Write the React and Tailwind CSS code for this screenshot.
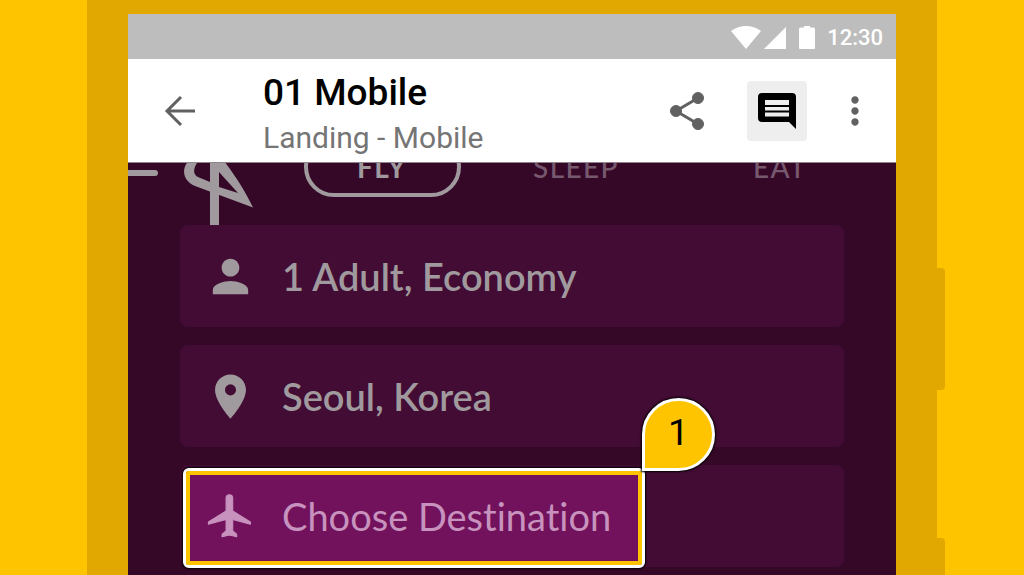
import { MdMoreVert, MdPerson, MdPlace } from "react-icons/md";

function StatusBar() {
  return (
    <div className="flex h-[45px] items-center justify-end bg-[#bdbdbd] pt-0.5 pr-[13px] text-white">
      <svg className="h-6 w-[30px]" viewBox="0 0 30 24" fill="currentColor">
        <path d="M15 23 0 5Q7 0 15 0t15 5Z" />
      </svg>
      <svg className="ml-[3px] h-6 w-[22px]" viewBox="0 0 22 24" fill="currentColor">
        <path d="M22 1v22H0Z" />
      </svg>
      <svg className="ml-[13px] h-6 w-4" viewBox="0 0 16 24" fill="currentColor">
        <path d="M5 0h6v1.500h3.500q1.500 0 1.500 1.500V22q0 1-1 1h-14Q0 23 0 22v-19Q0 1.500 1.500 1.500H5Z" />
      </svg>
      <span className="ml-3 text-[22px] leading-6 font-medium">12:30</span>
    </div>
  );
}

function AppBar() {
  return (
    <header className="relative z-10 flex h-[104px] items-center border-b border-[#8d858b] bg-white pr-[19px] pl-[30px] text-[#616161]">
      <button aria-label="Back" className="flex h-11 w-11 items-center justify-center">
        <svg className="h-8 w-8" viewBox="0 0 32 32" fill="none" stroke="currentColor" strokeWidth="3">
          <path d="M31 16H3M17 2 3 16l14 14" />
        </svg>
      </button>
      <div className="ml-[61px] flex-1 pt-2">
        <h1 className="text-[37px] leading-[46px] font-medium text-black">01 Mobile</h1>
        <p className="text-[30px] leading-[44px] text-[#757575]">Landing - Mobile</p>
      </div>
      <button aria-label="Share" className="flex h-11 w-11 items-center justify-center">
        <svg className="h-10 w-9" viewBox="0 0 36 40" fill="currentColor" stroke="currentColor">
          <path d="M29 7 7 20l22 13" fill="none" strokeWidth="3" />
          <circle cx="29" cy="7" r="5.500" />
          <circle cx="7" cy="20" r="5.500" />
          <circle cx="29" cy="33" r="5.500" />
        </svg>
      </button>
      <button
        aria-label="Comments"
        className="ml-[38px] flex h-15 w-15 items-center justify-center rounded-sm bg-[#eeeeee] text-black"
      >
        <svg className="h-9 w-[38px]" viewBox="0 0 38 36" fill="currentColor">
          <path
            fillRule="evenodd"
            d="M4 0h30q4 0 4 4v32l-7-7H4q-4 0-4-4V4Q0 0 4 0ZM7 7v5h24V7ZM7 14v3.500h24V14ZM7 19.500v4h24v-4Z"
          />
        </svg>
      </button>
      <button aria-label="More" className="ml-[26px] flex h-11 w-11 items-center justify-center">
        <MdMoreVert size={46} />
      </button>
    </header>
  );
}

function TabRow() {
  return (
    <nav className="-mt-[26px] flex h-[88px] pr-[9px] text-[28px] leading-8 font-bold tracking-wider text-[#a09a9e]">
      <button aria-label="Menu" className="w-[30px]">
        <svg className="h-[88px] w-[30px]" viewBox="0 0 30 88" stroke="currentColor" strokeWidth="6" strokeLinecap="round">
          <path d="M-8 17h35M-8 36h35" />
        </svg>
      </button>
      <a href="#home" aria-label="Home" className="ml-[25px] w-[102px]">
        <svg className="h-[88px] w-[72px]" viewBox="0 0 72 88" fill="currentColor">
          <path
            fillRule="evenodd"
            d="M15 18C-2 24-4 42 12 49L70 70.500C62 54 52 38 38 20ZM14 26c-4 6-4 12 1 14l12 5V24h-7q-4 0-6 2ZM36 35l19 21-19-6Z"
          />
          <path d="M27 10h9v78h-9z" />
        </svg>
      </a>
      <div className="grid flex-1 grid-cols-[97fr_97fr_107fr] items-start justify-items-center">
        <button className="h-15 w-[157px] rounded-full border-4 border-current">FLY</button>
        <button className="h-15 font-medium text-[#76596e]">SLEEP</button>
        <button className="h-15 font-medium text-[#76596e]">EAT</button>
      </div>
    </nav>
  );
}

function SearchCard({ icon, label }) {
  return (
    <button className="flex h-[102px] w-full items-center rounded-lg bg-[#430c34] pl-6 text-left text-[#a09a9e]">
      {icon}
      <span className="ml-[25px] text-[38px] leading-10 font-semibold">{label}</span>
    </button>
  );
}

function DestinationCard() {
  return (
    <div className="h-[102px] rounded-lg bg-[#430c34] pt-[3px] pl-[3px]">
      <div className="relative h-[100px] w-[462px] rounded-md border-3 border-white shadow-[0_0_2px_1px_#000000]">
        <button className="flex h-full w-full items-center rounded-xs border-4 border-[#ffc400] bg-[#72125c] pb-1 pl-[14px] text-left text-[#c792bd]">
          <svg
            className="h-[53px] w-[53px]"
            viewBox="0 0 24 24"
            fill="currentColor"
            stroke="currentColor"
            strokeWidth="0.5"
            strokeLinejoin="round"
          >
            <path d="M21 15.500v-1l-8-5V3.700c0-.83-.67-1.500-1.500-1.500S10 2.870 10 3.700v5.800l-8 5v1L10 13.300V18.500l-1.800 1.500V21.200l3.300-.8 3.300.8v-1.200L13 18.500v-5.200Z" />
          </svg>
          <span className="ml-[25px] text-[38px] leading-10 whitespace-nowrap [font-variant-ligatures:none]">
            Choose Destination
          </span>
        </button>
        <span className="absolute -right-[73px] bottom-[94px] flex h-[73px] w-[73px] items-center justify-center rounded-full rounded-bl-none border-3 border-white bg-[#ffc400] pb-1 font-['Roboto',sans-serif] text-[37px] text-black shadow-[0_0_2px_1px_#000000]">
          1
        </span>
      </div>
    </div>
  );
}

export default function App() {
  return (
    <div className="flex min-h-screen bg-[#ffc400] font-['Roboto',sans-serif]">
      <main className="ml-[87px] flex flex-1 flex-col bg-[#e0a800] px-[41px] pt-[14px]">
        <StatusBar />
        <AppBar />
        <section className="flex-1 overflow-hidden bg-[#360828] font-['Lato',sans-serif]">
          <TabRow />
          <div className="flex flex-col gap-[18px] px-[52px] pb-2">
            <SearchCard icon={<MdPerson size={53} />} label="1 Adult, Economy" />
            <SearchCard icon={<MdPlace size={53} />} label="Seoul, Korea" />
            <DestinationCard />
          </div>
        </section>
      </main>
      {/* side keys of the phone */}
      <div className="flex w-[87px] flex-col items-start gap-[148px] pt-[268px]">
        <div className="h-[122px] w-2 rounded-r-sm bg-[#e0a800]" />
        <div className="w-2 flex-1 rounded-tr-sm bg-[#e0a800]" />
      </div>
    </div>
  );
}
